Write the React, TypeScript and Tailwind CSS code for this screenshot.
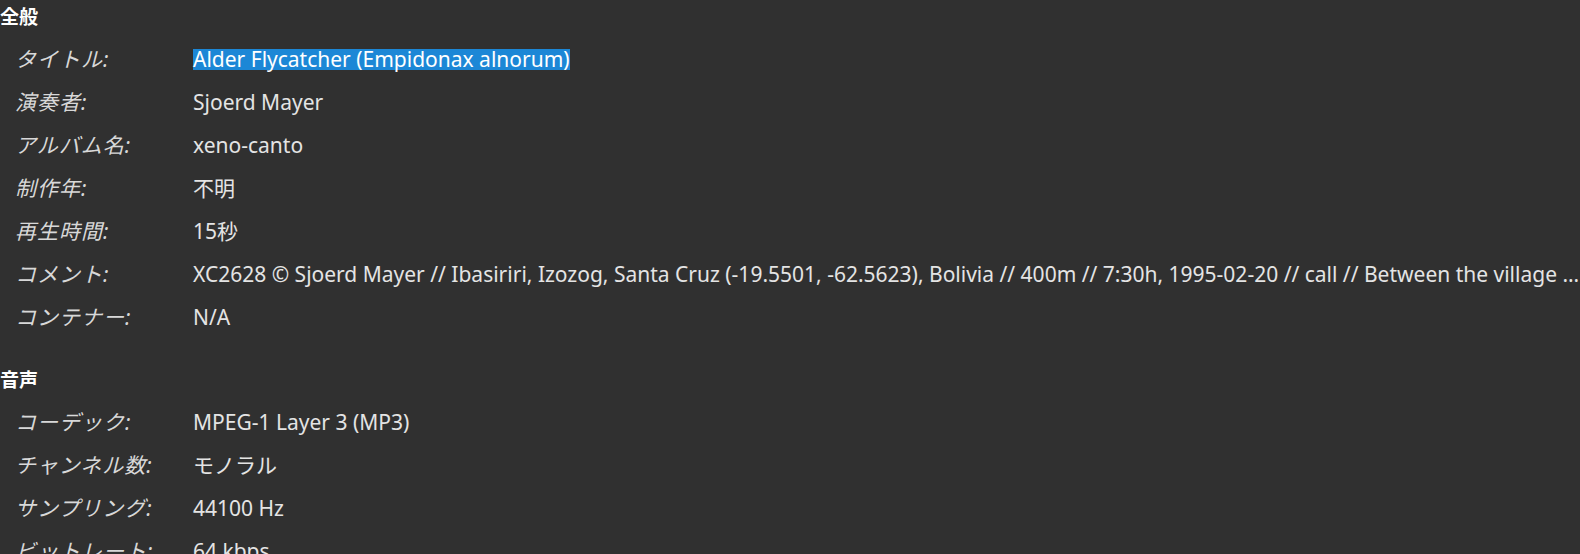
const FONT = "font-['Noto_Sans','Noto_Sans_CJK_JP',sans-serif]";

type Row = { label: string; value: string; selected?: boolean };

const general: Row[] = [
  { label: "タイトル:", value: "Alder Flycatcher (Empidonax alnorum)", selected: true },
  { label: "演奏者:", value: "Sjoerd Mayer" },
  { label: "アルバム名:", value: "xeno-canto" },
  { label: "制作年:", value: "不明" },
  { label: "再生時間:", value: "15秒" },
  {
    label: "コメント:",
    value:
      "XC2628 © Sjoerd Mayer // Ibasiriri, Izozog, Santa Cruz (-19.5501, -62.5623), Bolivia // 400m // 7:30h, 1995-02-20 // call // Between the village …",
  },
  { label: "コンテナー:", value: "N/A" },
];

const audio: Row[] = [
  { label: "コーデック:", value: "MPEG-1 Layer 3 (MP3)" },
  { label: "チャンネル数:", value: "モノラル" },
  { label: "サンプリング:", value: "44100 Hz" },
  { label: "ビットレート:", value: "64 kbps" },
];

function Section({ title, rows, className }: { title: string; rows: Row[]; className?: string }) {
  return (
    <section className={className}>
      <h2 className="flex h-[38px] items-center pb-[4px] text-[19px] font-bold text-white">
        {title}
      </h2>
      {rows.map((row) => (
        <div key={row.label} className="flex h-[43px] items-center">
          <span className="w-[193px] shrink-0 pl-[15px] italic tracking-[1px] text-[#d8d8d8]">
            {row.label}
          </span>
          <span
            className={
              row.selected
                ? "inline-block h-[21px] whitespace-nowrap bg-[#1c87d6] leading-[21px] text-white"
                : "whitespace-nowrap text-[#e4e4e4]"
            }
          >
            {row.value}
          </span>
        </div>
      ))}
    </section>
  );
}

export default function App() {
  return (
    <div className={`h-[554px] w-[1580px] overflow-hidden bg-[#303030] text-[21px] ${FONT}`}>
      <Section title="全般" rows={general} />
      <Section title="音声" rows={audio} className="mt-[24px]" />
    </div>
  );
}
